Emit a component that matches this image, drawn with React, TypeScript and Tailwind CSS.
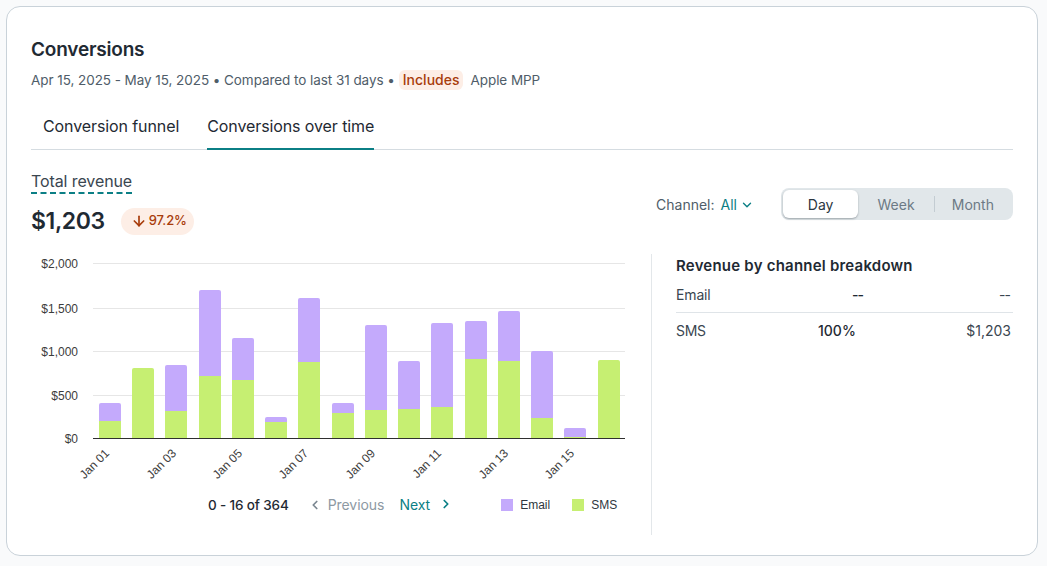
import React from 'react';
import { ArrowDown, ChevronDown, ChevronLeft, ChevronRight } from 'lucide-react';

const gridLines = [
  { y: 263.5, label: '$2,000' },
  { y: 308.5, label: '$1,500' },
  { y: 351.5, label: '$1,000' },
  { y: 395.5, label: '$500' },
  { y: 438.5, label: '$0' },
];

// x, top of stack, top of green part
const bars = [
  { x: 99, top: 403, split: 421 },
  { x: 132, top: 368, split: 368 },
  { x: 165, top: 365, split: 411 },
  { x: 199, top: 290, split: 376 },
  { x: 232, top: 338, split: 380 },
  { x: 265, top: 417, split: 422 },
  { x: 298, top: 298, split: 362 },
  { x: 332, top: 403, split: 413 },
  { x: 365, top: 325, split: 410 },
  { x: 398, top: 361, split: 409 },
  { x: 431, top: 323, split: 407 },
  { x: 465, top: 321, split: 359 },
  { x: 498, top: 311, split: 361 },
  { x: 531, top: 351, split: 418 },
  { x: 564, top: 428, split: 437 },
  { x: 598, top: 360, split: 360 },
];

const ticks = [
  { x: 110, label: 'Jan 01' },
  { x: 177, label: 'Jan 03' },
  { x: 243, label: 'Jan 05' },
  { x: 309, label: 'Jan 07' },
  { x: 376, label: 'Jan 09' },
  { x: 442, label: 'Jan 11' },
  { x: 509, label: 'Jan 13' },
  { x: 575, label: 'Jan 15' },
];

function stack(x: number, top: number, bottom: number) {
  const w = 22;
  const r = 2;
  return `M${x} ${bottom}V${top + r}Q${x} ${top} ${x + r} ${top}H${x + w - r}Q${x + w} ${top} ${x + w} ${top + r}V${bottom}Z`;
}

function Chart() {
  // svg origin sits at page x=31, y=255
  return (
    <svg width="600" height="235" viewBox="31 255 600 235" className="block font-['Liberation_Sans',sans-serif]">
      {gridLines.map((g) => (
        <g key={g.label}>
          <line x1="93" x2="625" y1={g.y} y2={g.y} stroke="#e6e6e6" strokeWidth="1" />
          <text x="78" y={g.y + 4} textAnchor="end" fontSize="12" fill="#3c3c3c">{g.label}</text>
        </g>
      ))}
      {bars.map((b) => (
        <g key={b.x}>
          {b.top !== b.split && <path d={stack(b.x, b.top, b.split + 1)} fill="#c4aafc" />}
          <path
            d={b.top !== b.split ? `M${b.x} 438V${b.split}H${b.x + 22}V438Z` : stack(b.x, b.split, 438)}
            fill="#c6ef72"
          />
        </g>
      ))}
      <line x1="93" x2="625" y1="438.5" y2="438.5" stroke="#2f2f2f" strokeWidth="1.2" />
      {ticks.map((t) => (
        <text
          key={t.label}
          x={t.x}
          y={454}
          textAnchor="end"
          fontSize="12"
          fill="#3c3c3c"
          transform={`rotate(-45 ${t.x} 454)`}
        >
          {t.label}
        </text>
      ))}
    </svg>
  );
}

export default function App() {
  return (
    <div className="h-[566px] w-[1047px] overflow-hidden bg-[#f9fafb] p-[6px] pb-[10px] font-['Inter',sans-serif] text-[#1f2a33]">
      <div className="h-[550px] w-[1032px] rounded-[14px] border border-[#c9d2d9] bg-white px-6 pt-[29px]">
        <h2 className="text-[19px] leading-[28px] font-semibold tracking-[-0.2px]">Conversions</h2>
        <div className="mt-[5px] flex h-[22px] items-center text-[13.5px] tracking-[-0.06px] text-[#4f5d69]">
          <span>Apr 15, 2025 - May 15, 2025 • Compared to last 31 days •</span>
          <span className="ml-1 rounded-md bg-[#fdeee6] px-1 text-[14px] leading-[20px] font-medium tracking-normal text-[#a83c0b]">Includes</span>
          <span className="ml-[7px]">Apple MPP</span>
        </div>

        <div className="mt-[14px] flex h-[45px] border-b border-[#d5dce1] text-[16px] tracking-[-0.1px]">
          <div className="ml-3 pt-[9px] text-[#1f2a33]">Conversion funnel</div>
          <div className="ml-7 -mb-px border-b-2 border-[#0b7f85] pt-[9px] text-[#1f2a33]">Conversions over time</div>
        </div>

        <div className="flex justify-between">
          <div>
            <div className="mt-[20px] inline-block border-b-2 border-dashed border-[#0b7f85] text-[16px] leading-[22px] tracking-[-0.1px] text-[#3a4650]">Total revenue</div>
            <div className="mt-[11px] flex h-[32px] items-center">
              <span className="text-[23px] font-semibold tracking-[-0.4px]">$1,203</span>
              <span className="ml-4 flex h-[27px] items-center rounded-full bg-[#fdeee6] pr-[7px] pl-[10px] text-[13px] font-medium tracking-[-0.1px] text-[#a83c0b]">
                <ArrowDown className="mr-[2px] h-4 w-4" strokeWidth={2.5} />
                97.2%
              </span>
            </div>
          </div>
          <div className="mt-[38px] flex items-start">
            <div className="mt-[6px] flex items-center text-[14px] text-[#4f5d69]">
              Channel:
              <span className="ml-[6px] text-[#0b7f85]">All</span>
              <ChevronDown className="ml-[3px] h-[14px] w-[14px] text-[#0b7f85]" strokeWidth={2.4} />
            </div>
            <div className="ml-[27px] flex h-[32px] w-[232px] items-center rounded-lg bg-[#e1e7ea] p-[2px] text-[14px] text-[#6c7a85]">
              <div className="flex h-[28px] w-[76px] items-center justify-center rounded-md bg-white text-[#2b3640] shadow-[0_1px_2px_rgba(31,42,51,0.35)]">Day</div>
              <div className="w-[76px] text-center">Week</div>
              <div className="h-[16px] w-px bg-[#c3ccd2]"></div>
              <div className="w-[77px] text-center">Month</div>
            </div>
          </div>
        </div>

        <div className="flex">
          <div className="w-[620px] pt-[18px]">
            <Chart />
            <div className="mt-[5px] flex h-[20px] items-center text-[14px] tracking-[-0.05px]">
              <span className="ml-[177px] text-[13.5px] font-medium tracking-[-0.15px]">0 - 16 of 364</span>
              <ChevronLeft className="ml-[19px] h-[14px] w-[14px] text-[#7b8791]" strokeWidth={3} />
              <span className="ml-[6px] -translate-y-px text-[#8d99a3]">Previous</span>
              <span className="ml-[15px] -translate-y-px text-[#0b7f85]">Next</span>
              <ChevronRight className="ml-[9px] h-[14px] w-[14px] -translate-y-px text-[#0b7f85]" strokeWidth={3} />
              <span className="ml-[48px] h-3 w-3 bg-[#c4aafc]"></span>
              <span className="ml-[7px] font-['Liberation_Sans',sans-serif] text-[12px] tracking-normal text-[#2f3740]">Email</span>
              <span className="ml-[22px] h-3 w-3 bg-[#c6ef72]"></span>
              <span className="ml-[7px] font-['Liberation_Sans',sans-serif] text-[12px] tracking-normal text-[#2f3740]">SMS</span>
            </div>
          </div>
          <div className="mt-[17px] h-[281px] flex-1 border-l border-[#e3e7ea] pl-6">
            <div className="mt-[1px] text-[15px] leading-[22px] font-semibold tracking-[0.22px]">Revenue by channel breakdown</div>
            <div className="mt-[8px] grid h-[28px] grid-cols-[142px_60px_1fr] items-start border-b border-[#dfe4e8] text-[14px] leading-[20px]">
              <span className="tracking-[-0.15px] text-[#3a4650]">Email</span>
              <span className="pl-[34px] font-medium tracking-[-1px]">--</span>
              <span className="pr-[3px] text-right tracking-[-1px] text-[#3a4650]">--</span>
            </div>
            <div className="mt-[8px] grid grid-cols-[142px_60px_1fr] text-[14px] leading-[20px]">
              <span className="tracking-[-0.3px] text-[#3a4650]">SMS</span>
              <span className="font-medium">100%</span>
              <span className="pr-[2px] text-right text-[#3a4650]">$1,203</span>
            </div>
          </div>
        </div>
      </div>
    </div>
  );
}
